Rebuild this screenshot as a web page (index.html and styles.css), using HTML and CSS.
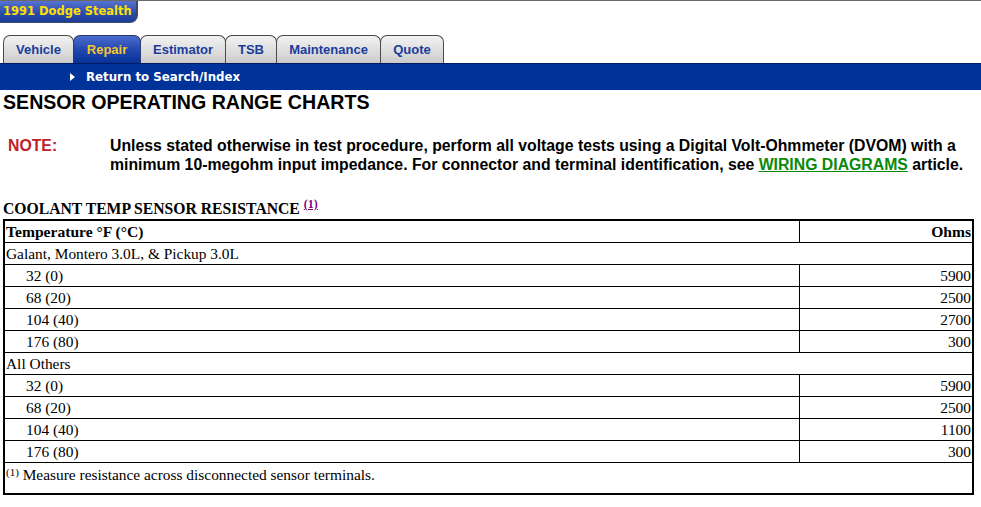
FILE: index.html
```html
<!DOCTYPE html>
<html>
<head>
<meta charset="utf-8">
<link rel="stylesheet" href="styles.css">
</head>
<body>
<div class="topbar">
  <div class="title-tab">1991 Dodge Stealth</div>
</div>
<div class="tabs">
  <div class="tab t-vehicle">Vehicle</div>
  <div class="tab t-repair active">Repair</div>
  <div class="tab t-estimator">Estimator</div>
  <div class="tab t-tsb">TSB</div>
  <div class="tab t-maint">Maintenance</div>
  <div class="tab t-quote">Quote</div>
</div>
<div class="navbar">
  <span class="arrow"></span>
  <span class="navlink">Return to Search/Index</span>
</div>
<h1 class="heading">SENSOR OPERATING RANGE CHARTS</h1>
<div class="note">
  <div class="note-label">NOTE:</div>
  <div class="note-text">Unless stated otherwise in test procedure, perform all voltage tests using a Digital Volt-Ohmmeter (DVOM) with a minimum 10-megohm input impedance. For connector and terminal identification, see <a class="wiring">WIRING DIAGRAMS</a> article.</div>
</div>
<div class="table-title">COOLANT TEMP SENSOR RESISTANCE <sup class="fn-link">(1)</sup></div>
<table class="chart">
  <tr class="head"><th class="c1">Temperature °F (°C)</th><th class="c2">Ohms</th></tr>
  <tr><td colspan="2">Galant, Montero 3.0L, &amp; Pickup 3.0L</td></tr>
  <tr><td class="ind">32 (0)</td><td class="num">5900</td></tr>
  <tr><td class="ind">68 (20)</td><td class="num">2500</td></tr>
  <tr><td class="ind">104 (40)</td><td class="num">2700</td></tr>
  <tr><td class="ind">176 (80)</td><td class="num">300</td></tr>
  <tr><td colspan="2">All Others</td></tr>
  <tr><td class="ind">32 (0)</td><td class="num">5900</td></tr>
  <tr><td class="ind">68 (20)</td><td class="num">2500</td></tr>
  <tr><td class="ind">104 (40)</td><td class="num">1100</td></tr>
  <tr><td class="ind">176 (80)</td><td class="num">300</td></tr>
  <tr class="foot"><td colspan="2"><sup class="fn">(1)</sup> Measure resistance across disconnected sensor terminals.</td></tr>
</table>
</body>
</html>
```
FILE: styles.css
```css
html, body {
  margin: 0;
  padding: 0;
  background: #ffffff;
}
body {
  font-family: "Liberation Sans", Arial, sans-serif;
  color: #000;
}
.topbar {
  border-top: 1px solid #6a6a6a;
  height: 22px;
  display: flex;
}
.title-tab {
  width: 133px;
  height: 21px;
  padding-left: 3px;
  background: linear-gradient(#5573d0, #2a4aa8 60%, #1d3c98);
  border-right: 2px solid #3a4a6a;
  border-bottom: 1px solid #3a4a6a;
  border-bottom-right-radius: 8px;
  color: #ffe000;
  font-family: "DejaVu Sans", Verdana, sans-serif;
  font-weight: bold;
  font-size: 11.5px;
  line-height: 21px;
  white-space: nowrap;
}
.tabs {
  display: flex;
  padding-left: 3px;
  margin-top: 12px;
  height: 28px;
}
.tab {
  box-sizing: border-box;
  height: 28px;
  margin-right: -1px;
  border: 1px solid #4a4a4a;
  border-bottom: none;
  border-radius: 7px 7px 0 0;
  background: linear-gradient(#f2f2f2, #d8d8d8 70%, #cacaca);
  color: #1a3c9c;
  font-weight: bold;
  font-size: 13px;
  line-height: 27px;
  text-align: center;
  white-space: nowrap;
}
.t-vehicle { width: 71px; }
.t-repair { width: 68px; }
.t-estimator { width: 86px; }
.t-tsb { width: 52px; }
.t-maint { width: 105px; }
.t-quote { width: 64px; }
.tab.active {
  background: linear-gradient(#4a6ccc, #2448b0 50%, #063296);
  color: #f6c62a;
  border-color: #2a3a70;
  position: relative;
  z-index: 1;
}
.navbar {
  background: #003399;
  height: 27px;
  display: flex;
  align-items: center;
  border-top: 1px solid #001a66;
  box-sizing: border-box;
}
.arrow {
  width: 0;
  height: 0;
  margin-left: 70px;
  border-top: 4px solid transparent;
  border-bottom: 4px solid transparent;
  border-left: 5px solid #ffffff;
}
.navlink {
  margin-left: 11px;
  color: #ffffff;
  font-family: "DejaVu Sans", Verdana, sans-serif;
  font-weight: bold;
  font-size: 11.8px;
}
.heading {
  margin: 0;
  padding: 1px 0 0 3px;
  font-size: 19.6px;
  font-weight: bold;
  line-height: 22px;
}
.note {
  display: flex;
  margin-top: 23px;
  font-size: 15.8px;
  font-weight: bold;
  line-height: 19px;
}
.note-label {
  width: 102px;
  padding-left: 8px;
  color: #c0202a;
  flex: none;
}
.note-text {
  flex: 1;
}
.wiring {
  color: #0a8a0a;
  text-decoration: underline;
}
.table-title {
  margin-top: 25px;
  padding-left: 3px;
  font-family: "Liberation Serif", "Times New Roman", serif;
  font-weight: bold;
  font-size: 15.7px;
  line-height: 20px;
}
.fn-link {
  color: #800080;
  text-decoration: underline;
  font-size: 12px;
  vertical-align: 6px;
  line-height: 0;
}
.chart {
  margin-left: 3px;
  width: 971px;
  border-collapse: collapse;
  border: 2px solid #000;
  font-family: "Liberation Serif", "Times New Roman", serif;
  font-size: 15.4px;
}
.chart td, .chart th {
  border: 1px solid #000;
  height: 21px;
  padding: 0 1px;
  line-height: 16px;
}
.chart th {
  font-size: 15.6px;
  text-align: left;
}
.chart th.c2 {
  text-align: right;
  width: 170px;
}
.chart td.ind {
  padding-left: 21px;
}
.chart td.num {
  text-align: right;
}
.chart tr.foot td {
  height: 26px;
  vertical-align: top;
  padding-top: 4px;
}
.fn {
  font-size: 11px;
  vertical-align: 4px;
  line-height: 0;
}
```
